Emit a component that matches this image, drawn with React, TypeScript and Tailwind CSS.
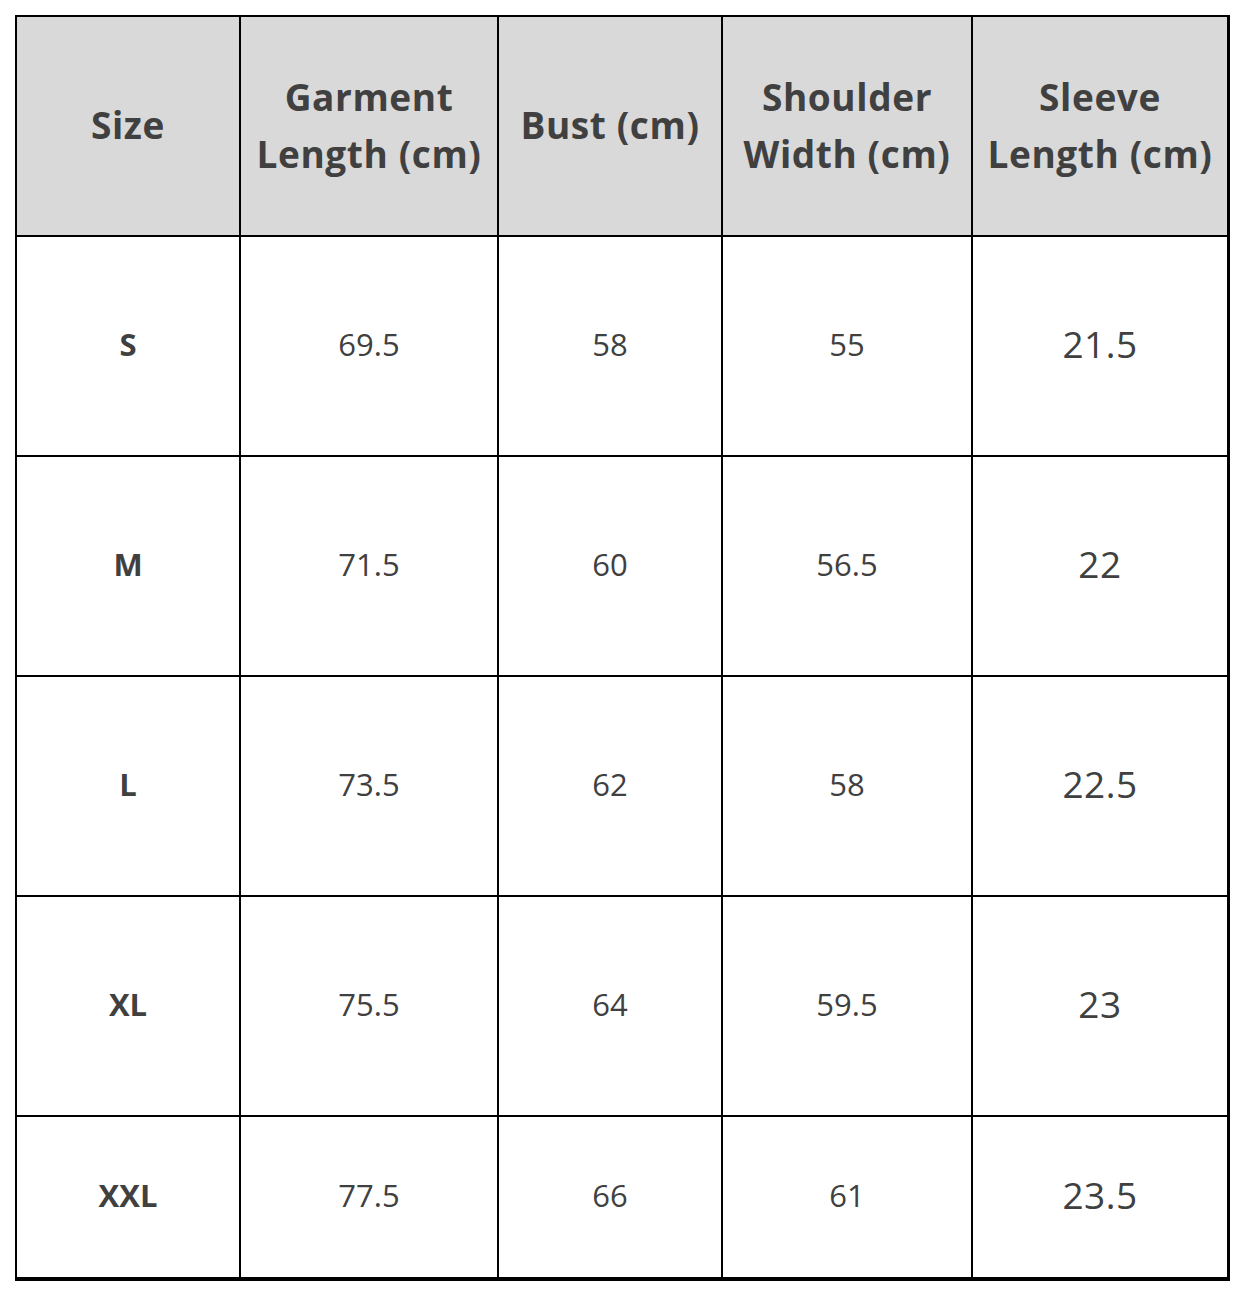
const headers = ['Size', 'Garment Length (cm)', 'Bust (cm)', 'Shoulder Width (cm)', 'Sleeve Length (cm)'];

const rows = [
  ['S', '69.5', '58', '55', '21.5'],
  ['M', '71.5', '60', '56.5', '22'],
  ['L', '73.5', '62', '58', '22.5'],
  ['XL', '75.5', '64', '59.5', '23'],
  ['XXL', '77.5', '66', '61', '23.5'],
];

const headerLines: Record<string, string[]> = {
  'Garment Length (cm)': ['Garment', 'Length (cm)'],
  'Shoulder Width (cm)': ['Shoulder', 'Width (cm)'],
  'Sleeve Length (cm)': ['Sleeve', 'Length (cm)'],
};

export default function App() {
  return (
    <div className="w-[1246px] h-[1296px] bg-white pt-[15px] pl-[15px]" style={{ fontFamily: '"Open Sans", "Noto Sans", sans-serif' }}>
      <div className="inline-grid grid-cols-[222px_256px_222px_248px_254px] grid-rows-[218px_218px_218px_218px_218px_160px] gap-[2px] bg-black pt-[2px] pl-[2px] pr-[3px] pb-[4px] text-[#404040]">
        {headers.map((h) => (
          <div key={h} className="bg-[#d9d9d9] flex flex-col items-center justify-center pb-[3px] text-center font-bold text-[37px] tracking-[0.6px] leading-[57px]">
            {(headerLines[h] ?? [h]).map((line) => (
              <span key={line} className="whitespace-nowrap">{line}</span>
            ))}
          </div>
        ))}
        {rows.map((row) =>
          row.map((cell, i) => (
            <div
              key={row[0] + i}
              className={
                'bg-white flex items-center justify-center pb-[4px] ' +
                (i === 0 ? 'font-bold text-[31px]' : i === 4 ? 'text-[37px] tracking-[0.5px]' : 'text-[31px]')
              }
            >
              {cell}
            </div>
          )),
        )}
      </div>
    </div>
  );
}
